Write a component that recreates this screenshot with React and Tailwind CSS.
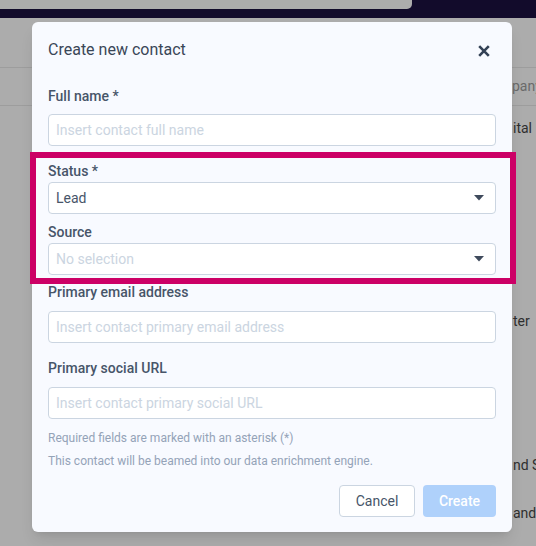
import React from "react";

const Label = ({ children, className = "" }) => (
  <div className={`text-[14px] leading-5 font-medium text-[#475569] ${className}`}>{children}</div>
);

const TextInput = ({ placeholder, className = "" }) => (
  <input
    placeholder={placeholder}
    className={`block w-full h-8 px-[7px] bg-white border border-[#cbd5e1] rounded-[4px] text-[14px] text-[#475569] placeholder:text-[#cbd5e1] focus:outline-none ${className}`}
  />
);

const Select = ({ value, placeholder, className = "" }) => (
  <div
    className={`flex items-center justify-between h-8 pl-[7px] pr-[11px] bg-white border border-[#cbd5e1] rounded-[4px] text-[14px] ${className}`}
  >
    <span className={value ? "text-[#475569]" : "text-[#cbd5e1]"}>{value || placeholder}</span>
    <svg width="10" height="6" viewBox="0 0 10 6">
      <path d="M0 0 H10 L5 5.5 Z" fill="#3f4a5c" />
    </svg>
  </div>
);

const BgRow = ({ children, className = "" }) => (
  <div className={`h-[36px] flex items-center pl-[513px] whitespace-nowrap text-[14px] text-[#2f2f2f] ${className}`}>
    {children}
  </div>
);

const App = () => {
  return (
    <div
      className="relative w-full h-[546px] overflow-hidden bg-[#acacac]"
      style={{ fontFamily: "Roboto, 'Liberation Sans', sans-serif" }}
    >
      {/* page behind the overlay */}
      <div className="h-[18px] bg-[#120b2b]">
        <div className="w-[412px] h-[9px] bg-[#acacac] rounded-br-[5px]" />
      </div>
      <div className="h-[49px]" />
      <div className="h-[39px] border-y border-[#9d9d9d] flex items-center pl-[512px] whitespace-nowrap text-[14px] text-[#6a6a6a]">
        pany
      </div>
      <BgRow className="h-[44px]">ital</BgRow>
      <div className="h-[153px]" />
      <BgRow>ter</BgRow>
      <div className="h-[108px]" />
      <BgRow>nd S</BgRow>
      <div className="h-[12px]" />
      <BgRow>and</BgRow>

      {/* modal */}
      <div className="absolute left-[32px] top-[22px] w-[480px] h-[510px] bg-[#f8faff] rounded-[6px] shadow-lg px-4 pt-[16px]">
        <div className="flex items-center justify-between">
          <h2 className="text-[16px] leading-6 font-normal text-[#3a4657]">Create new contact</h2>
          <button className="mr-[6px] mt-[2px]">
            <svg width="12" height="12" viewBox="0 0 12 12">
              <path d="M1.2 1.2 L10.8 10.8 M10.8 1.2 L1.2 10.8" stroke="#334155" strokeWidth="2.6" />
            </svg>
          </button>
        </div>

        <Label className="mt-[24px]">Full name *</Label>
        <TextInput className="mt-[8px]" placeholder="Insert contact full name" />

        <Label className="mt-[15px]">Status *</Label>
        <Select className="mt-[1px]" value="Lead" />

        <Label className="mt-[8px]">Source</Label>
        <Select className="mt-[1px]" placeholder="No selection" />

        <Label className="mt-[7px]">Primary email address</Label>
        <TextInput className="mt-[9px]" placeholder="Insert contact primary email address" />

        <Label className="mt-[15px]">Primary social URL</Label>
        <TextInput className="mt-[9px]" placeholder="Insert contact primary social URL" />

        <p className="mt-[11px] text-[12px] leading-4 text-[#94a3b8]">Required fields are marked with an asterisk (*)</p>
        <p className="mt-[7px] text-[12px] leading-4 text-[#94a3b8]">This contact will be beamed into our data enrichment engine.</p>

        <div className="mt-[16px] flex justify-end gap-2">
          <button className="h-8 w-[76px] bg-white border border-[#cbd5e1] rounded-[4px] text-[14px] text-[#475569]">
            Cancel
          </button>
          <button className="h-8 w-[73px] bg-[#afd1fb] rounded-[4px] text-[14px] font-medium text-white">
            Create
          </button>
        </div>
      </div>

      {/* highlight annotation */}
      <div className="absolute left-[30px] top-[152px] w-[486px] h-[132px] border-[6px] border-[#cc0066] pointer-events-none" />
    </div>
  );
};

export default App;
